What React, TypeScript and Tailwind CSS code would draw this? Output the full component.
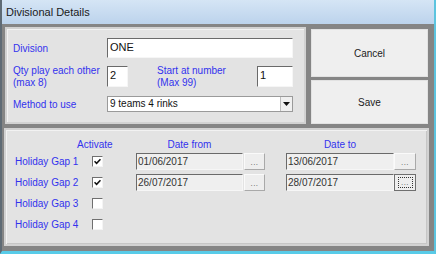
import React from 'react';

const font = { fontFamily: '"Liberation Sans", Arial, sans-serif' };

const Check = ({ on }: { on: boolean }) => (
  <div className="w-[11px] h-[11px] bg-white border border-t-[#6f6f6f] border-l-[#6f6f6f] border-b-[#f4f4f4] border-r-[#f4f4f4] flex items-center justify-center">
    {on && (
      <svg width="7" height="7" viewBox="0 0 7 7">
        <path d="M0.5 3.2 L2.6 5.3 L6.5 1.2" stroke="#111" strokeWidth="1.6" fill="none" />
      </svg>
    )}
  </div>
);

const DateBox = ({ value, w }: { value: string; w: string }) => (
  <div
    className={`${w} h-[17px] bg-[#efefef] border border-t-[#6a6a6a] border-l-[#6a6a6a] border-b-[#f6f6f6] border-r-[#f6f6f6] text-[10px] leading-[15px] text-[#333] pl-[1px]`}
  >
    {value}
  </div>
);

const Dots = ({ w, focus }: { w: string; focus?: boolean }) => (
  <div
    className={`${w} h-[17px] bg-[#eeeeee] border ${
      focus ? 'border-[#6f6f6f]' : 'border-t-[#fafafa] border-l-[#fafafa] border-b-[#a9a9a9] border-r-[#a9a9a9]'
    } flex items-center justify-center`}
  >
    <div
      className={`flex items-end justify-center w-[15px] h-[11px] ${
        focus ? 'border border-dotted border-[#333]' : ''
      }`}
    >
      <span className="text-[8px] leading-[8px] text-[#555] tracking-[0.5px]">...</span>
    </div>
  </div>
);

const rows = [
  { name: 'Holiday Gap 1', on: true, from: '01/06/2017', to: '13/06/2017' },
  { name: 'Holiday Gap 2', on: true, from: '26/07/2017', to: '28/07/2017', focus: true },
  { name: 'Holiday Gap 3', on: false },
  { name: 'Holiday Gap 4', on: false },
];

export default function App() {
  return (
    <div
      className="w-[436px] h-[254px] flex flex-col border-l-2 border-l-[#5f6b75] border-r-2 border-r-[#5cc4df] border-b-[3px] border-b-[#58cbe8] overflow-hidden"
      style={font}
    >
      <div className="h-[24px] shrink-0 bg-gradient-to-b from-[#d5e5f5] to-[#bcd3ec] flex items-center pl-[4px] text-[11px] text-[#1a1a1a]">
        Divisional Details
      </div>

      <div className="flex-1 bg-[#858585] flex flex-col pt-[3px]">
        <div className="flex h-[97px] ml-[3px]">
          <div className="w-[301px] h-full bg-[#e3e3e3] border-2 border-[#d2d2d2] shadow-[inset_1px_1px_0_#f2f2f2] pl-[6px] pt-[9px] flex flex-col text-[10px] text-[#3232ee]">
            <div className="flex items-center h-[20px]">
              <div className="w-[94px]">Division</div>
              <div className="w-[186px] h-[20px] bg-white border border-t-[#6a6a6a] border-l-[#6a6a6a] border-b-[#f6f6f6] border-r-[#f6f6f6] text-[11px] leading-[16px] text-[#111] pl-[2px]">
                ONE
              </div>
            </div>
            <div className="flex items-center h-[21px] mt-[8px]">
              <div className="w-[94px] leading-[12px]">
                Qty play each other
                <br />
                (max 8)
              </div>
              <div className="w-[21px] h-[21px] bg-white border border-t-[#6a6a6a] border-l-[#6a6a6a] border-b-[#f6f6f6] border-r-[#f6f6f6] text-[11px] leading-[16px] text-[#111] pl-[2px]">
                2
              </div>
              <div className="w-[29px]" />
              <div className="w-[100px] leading-[12px]">
                Start at number
                <br />
                (Max 99)
              </div>
              <div className="w-[36px] h-[21px] bg-white border border-t-[#6a6a6a] border-l-[#6a6a6a] border-b-[#f6f6f6] border-r-[#f6f6f6] text-[11px] leading-[16px] text-[#111] pl-[2px]">
                1
              </div>
            </div>
            <div className="flex items-center h-[16px] mt-[9px]">
              <div className="w-[94px]">Method to use</div>
              <div className="w-[186px] h-[16px] bg-white border border-[#9a9a9a] flex items-center">
                <div className="flex-1 text-[10px] leading-[14px] text-[#111] pl-[2px]">9 teams 4 rinks</div>
                <div className="w-[12px] h-[14px] bg-[#f0f0f0] border-l border-[#bdbdbd] flex items-center justify-center">
                  <svg width="7" height="4" viewBox="0 0 7 4">
                    <path d="M0 0 H7 L3.5 4 Z" fill="#111" />
                  </svg>
                </div>
              </div>
            </div>
          </div>

          <div className="ml-[5px] w-[117px] flex flex-col pt-[2px] gap-[3px]">
            <div className="h-[48px] bg-[#efefef] border border-[#e2e2e2] flex items-center justify-center text-[10px] text-[#222]">
              Cancel
            </div>
            <div className="flex-1 bg-[#efefef] border border-[#e2e2e2] flex items-center justify-center text-[10px] text-[#222]">
              Save
            </div>
          </div>
        </div>

        <div className="mt-[4px] ml-[2px] w-[425px] h-[118px] bg-[#e3e3e3] border-2 border-[#d2d2d2] shadow-[inset_1px_1px_0_#f2f2f2,inset_-1px_-1px_0_#c6c6c6] pl-[9px] pt-[8px] text-[10px] text-[#3232ee]">
          <div className="flex h-[13px] items-center">
            <div className="w-[62px]" />
            <div className="w-[33px] text-center whitespace-nowrap">Activate</div>
            <div className="w-[26px]" />
            <div className="w-[107px] text-center">Date from</div>
            <div className="w-[43px]" />
            <div className="w-[108px] text-center">Date to</div>
          </div>
          {rows.map((r) => (
            <div key={r.name} className="flex h-[21px] items-center">
              <div className="w-[77px]">{r.name}</div>
              <Check on={r.on} />
              <div className="w-[33px]" />
              {r.from && (
                <>
                  <DateBox value={r.from} w="w-[107px]" />
                  <div className="w-[1px]" />
                  <Dots w="w-[21px]" />
                  <div className="w-[21px]" />
                  <DateBox value={r.to!} w="w-[108px]" />
                  <Dots w="w-[22px]" focus={r.focus} />
                </>
              )}
            </div>
          ))}
        </div>
      </div>
    </div>
  );
}
